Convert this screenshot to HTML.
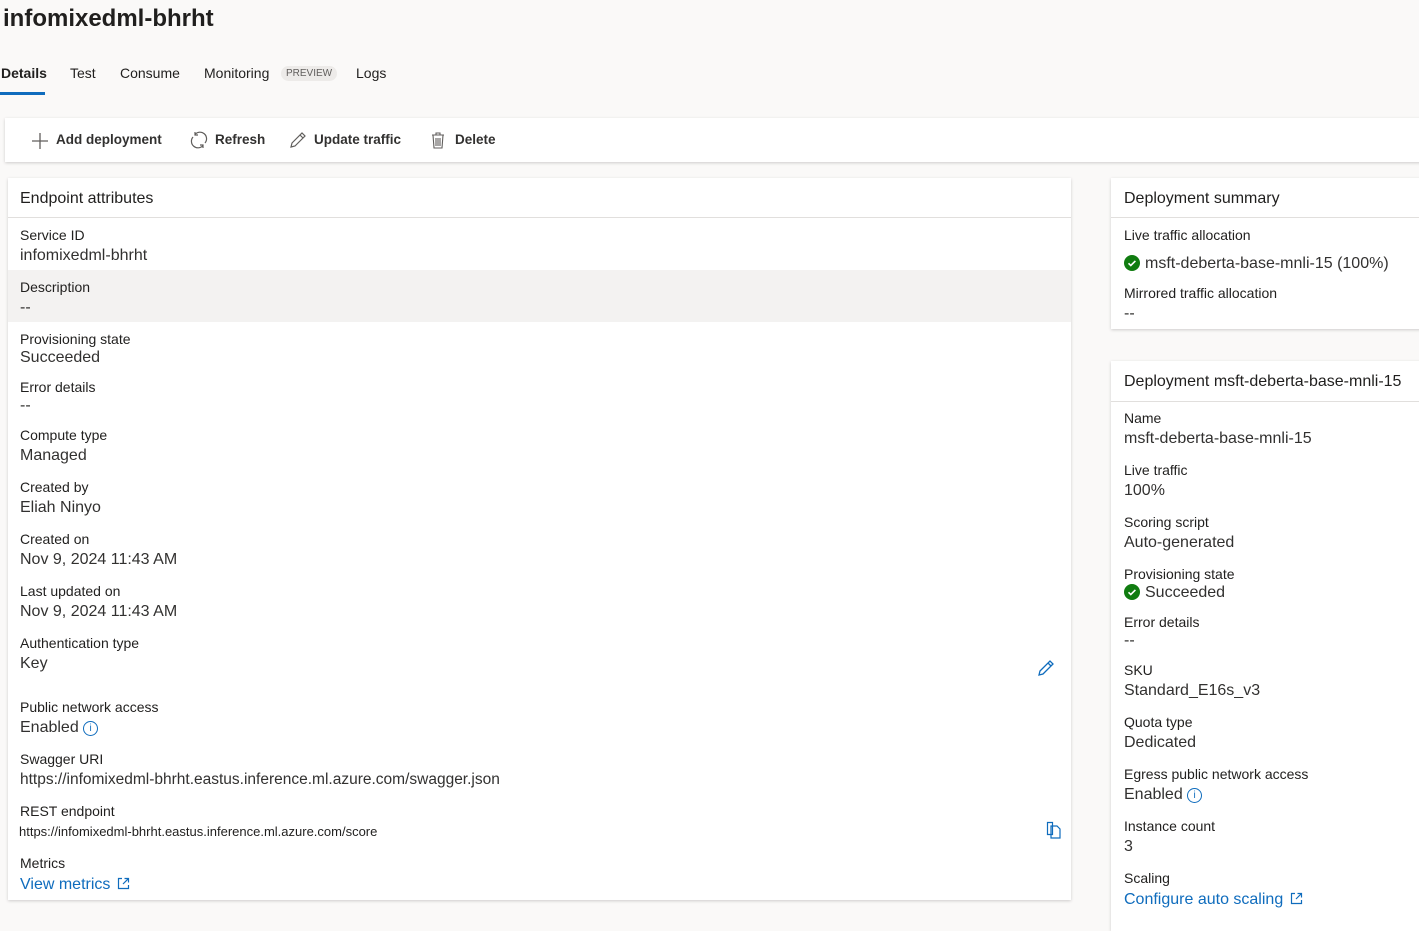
<!DOCTYPE html><html><head><style>
body{margin:0;width:1419px;height:921px;overflow:hidden;background:#faf9f8;font-family:"Segoe UI","Liberation Sans",sans-serif;color:#201f1e;position:relative}
.a{position:absolute;white-space:nowrap}
div.a{margin-top:1px}
.l{font-size:14px;margin-top:2px!important}
.v{font-size:16px;color:#323130;margin-top:2px!important}
.card{position:absolute;background:#fff;box-shadow:0 1px 3px rgba(0,0,0,.18);margin-top:0!important}
.tb{font-size:13.5px;font-weight:600;color:#323130}
</style></head><body>
<div class="a" style="left:3px;top:4px;font-size:24px;font-weight:600">infomixedml-bhrht</div>
<div class="a" style="left:1px;top:64px;font-size:14px;font-weight:600">Details</div>
<div class="a" style="left:0;top:91px;width:45px;height:3px;background:#0f6cbd"></div>
<div class="a" style="left:70px;top:64px;font-size:14px">Test</div>
<div class="a" style="left:120px;top:64px;font-size:14px">Consume</div>
<div class="a" style="left:204px;top:64px;font-size:14px">Monitoring</div>
<div class="a" style="left:281px;top:65px;font-size:10px;background:#edebe9;color:#605e5c;border-radius:8px;padding:2px 5px">PREVIEW</div>
<div class="a" style="left:356px;top:64px;font-size:14px">Logs</div>
<div class="card" style="left:5px;top:118px;width:1420px;height:44px"></div>
<svg class="a" style="left:31px;top:132px" width="18" height="18"><path d="M9 1v16M1 9h16" stroke="#605e5c" stroke-width="1.3"/></svg>
<div class="a tb" style="left:56px;top:131px">Add deployment</div>
<svg class="a" style="left:190px;top:131px" width="18" height="18" fill="none" stroke="#605e5c" stroke-width="1.2"><path d="M5 3.5A6.5 6.5 0 0 1 15 12M13 14.5A6.5 6.5 0 0 1 3 6"/><path d="M5 1v3h3M13 17v-3h-3"/></svg>
<div class="a tb" style="left:215px;top:131px">Refresh</div>
<svg class="a" style="left:289px;top:131px" width="18" height="18" fill="none" stroke="#605e5c" stroke-width="1.2"><path d="M2 16l1-4L13 2l3 3L6 15z M11 4l3 3"/></svg>
<div class="a tb" style="left:314px;top:131px">Update traffic</div>
<svg class="a" style="left:430px;top:131px" width="16" height="18" fill="none" stroke="#605e5c" stroke-width="1.1"><path d="M2 4h12M6 4V2h4v2M3 4l1 13h8l1-13M6 7v8M8 7v8M10 7v8"/></svg>
<div class="a tb" style="left:455px;top:131px">Delete</div>

<div class="card" style="left:8px;top:178px;width:1063px;height:722px"></div>
<div class="a" style="left:20px;top:189px;font-size:16px">Endpoint attributes</div>
<div class="a" style="left:8px;top:216px;width:1063px;height:1px;background:#e1dfdd"></div>
<div class="a" style="left:8px;top:269px;width:1063px;height:52px;background:#f3f2f1"></div>
<div class="a l" style="left:20px;top:225px">Service ID</div><div class="a v" style="left:20px;top:245px">infomixedml-bhrht</div>
<div class="a l" style="left:20px;top:277px">Description</div><div class="a v" style="left:20px;top:297px">--</div>
<div class="a l" style="left:20px;top:329px">Provisioning state</div><div class="a v" style="left:20px;top:347px">Succeeded</div>
<div class="a l" style="left:20px;top:377px">Error details</div><div class="a v" style="left:20px;top:395px">--</div>
<div class="a l" style="left:20px;top:425px">Compute type</div><div class="a v" style="left:20px;top:445px">Managed</div>
<div class="a l" style="left:20px;top:477px">Created by</div><div class="a v" style="left:20px;top:497px">Eliah Ninyo</div>
<div class="a l" style="left:20px;top:529px">Created on</div><div class="a v" style="left:20px;top:549px">Nov 9, 2024 11:43 AM</div>
<div class="a l" style="left:20px;top:581px">Last updated on</div><div class="a v" style="left:20px;top:601px">Nov 9, 2024 11:43 AM</div>
<div class="a l" style="left:20px;top:633px">Authentication type</div><div class="a v" style="left:20px;top:653px">Key</div>
<svg class="a" style="left:1037px;top:659px" width="18" height="18" fill="none" stroke="#0f6cbd" stroke-width="1.3"><path d="M2 16l1-4L13 2l3 3L6 15z M11 4l3 3"/></svg>
<div class="a l" style="left:20px;top:697px">Public network access</div><div class="a v" style="left:20px;top:717px">Enabled <span style="display:inline-block;width:13px;height:13px;border:1px solid #0f6cbd;border-radius:50%;font-size:10px;line-height:13px;text-align:center;color:#0f6cbd;vertical-align:1px">i</span></div>
<div class="a l" style="left:20px;top:749px">Swagger URI</div><div class="a v" style="left:20px;top:769px;font-size:15.5px">https://infomixedml-bhrht.eastus.inference.ml.azure.com/swagger.json</div>
<div class="a l" style="left:20px;top:801px">REST endpoint</div><div class="a" style="left:19px;top:823px;font-size:13px">https://infomixedml-bhrht.eastus.inference.ml.azure.com/score</div>
<svg class="a" style="left:1046px;top:821px" width="16" height="18" fill="none" stroke="#0f6cbd" stroke-width="1.2"><path d="M1.5 1.5h5v12h-5z M5 5h6l3 3v9H5z"/></svg>
<div class="a l" style="left:20px;top:853px">Metrics</div><div class="a v" style="left:20px;top:874px;color:#0f6cbd">View metrics <svg width="13" height="13" fill="none" stroke="#0f6cbd" stroke-width="1.2" style="vertical-align:-1px;margin-left:2px"><path d="M5 1.5H1.5v10h10V8M7.5 1.5h4v4M11.5 1.5L6 7"/></svg></div>

<div class="card" style="left:1111px;top:178px;width:320px;height:151px"></div>
<div class="a" style="left:1124px;top:189px;font-size:16px">Deployment summary</div>
<div class="a" style="left:1111px;top:216px;width:310px;height:1px;background:#e1dfdd"></div>
<div class="a l" style="left:1124px;top:225px">Live traffic allocation</div>
<svg class="a" style="left:1124px;top:255px" width="16" height="16"><circle cx="8" cy="8" r="8" fill="#107c10"/><path d="M4.5 8.3l2.3 2.2 4.6-4.6" stroke="#fff" stroke-width="1.6" fill="none"/></svg>
<div class="a v" style="left:1145px;top:253px">msft-deberta-base-mnli-15 (100%)</div>
<div class="a l" style="left:1124px;top:283px">Mirrored traffic allocation</div><div class="a v" style="left:1124px;top:303px">--</div>

<div class="card" style="left:1111px;top:361px;width:320px;height:570px"></div>
<div class="a" style="left:1124px;top:372px;font-size:16px">Deployment msft-deberta-base-mnli-15</div>
<div class="a" style="left:1111px;top:400px;width:310px;height:1px;background:#e1dfdd"></div>
<div class="a l" style="left:1124px;top:408px">Name</div><div class="a v" style="left:1124px;top:428px">msft-deberta-base-mnli-15</div>
<div class="a l" style="left:1124px;top:460px">Live traffic</div><div class="a v" style="left:1124px;top:480px">100%</div>
<div class="a l" style="left:1124px;top:512px">Scoring script</div><div class="a v" style="left:1124px;top:532px">Auto-generated</div>
<div class="a l" style="left:1124px;top:564px">Provisioning state</div>
<svg class="a" style="left:1124px;top:584px" width="16" height="16"><circle cx="8" cy="8" r="8" fill="#107c10"/><path d="M4.5 8.3l2.3 2.2 4.6-4.6" stroke="#fff" stroke-width="1.6" fill="none"/></svg>
<div class="a v" style="left:1145px;top:582px">Succeeded</div>
<div class="a l" style="left:1124px;top:612px">Error details</div><div class="a v" style="left:1124px;top:630px">--</div>
<div class="a l" style="left:1124px;top:660px">SKU</div><div class="a v" style="left:1124px;top:680px">Standard_E16s_v3</div>
<div class="a l" style="left:1124px;top:712px">Quota type</div><div class="a v" style="left:1124px;top:732px">Dedicated</div>
<div class="a l" style="left:1124px;top:764px">Egress public network access</div><div class="a v" style="left:1124px;top:784px">Enabled <span style="display:inline-block;width:13px;height:13px;border:1px solid #0f6cbd;border-radius:50%;font-size:10px;line-height:13px;text-align:center;color:#0f6cbd;vertical-align:1px">i</span></div>
<div class="a l" style="left:1124px;top:816px">Instance count</div><div class="a v" style="left:1124px;top:836px">3</div>
<div class="a l" style="left:1124px;top:868px">Scaling</div><div class="a v" style="left:1124px;top:889px;color:#0f6cbd">Configure auto scaling <svg width="13" height="13" fill="none" stroke="#0f6cbd" stroke-width="1.2" style="vertical-align:-1px;margin-left:2px"><path d="M5 1.5H1.5v10h10V8M7.5 1.5h4v4M11.5 1.5L6 7"/></svg></div>
</body></html>
